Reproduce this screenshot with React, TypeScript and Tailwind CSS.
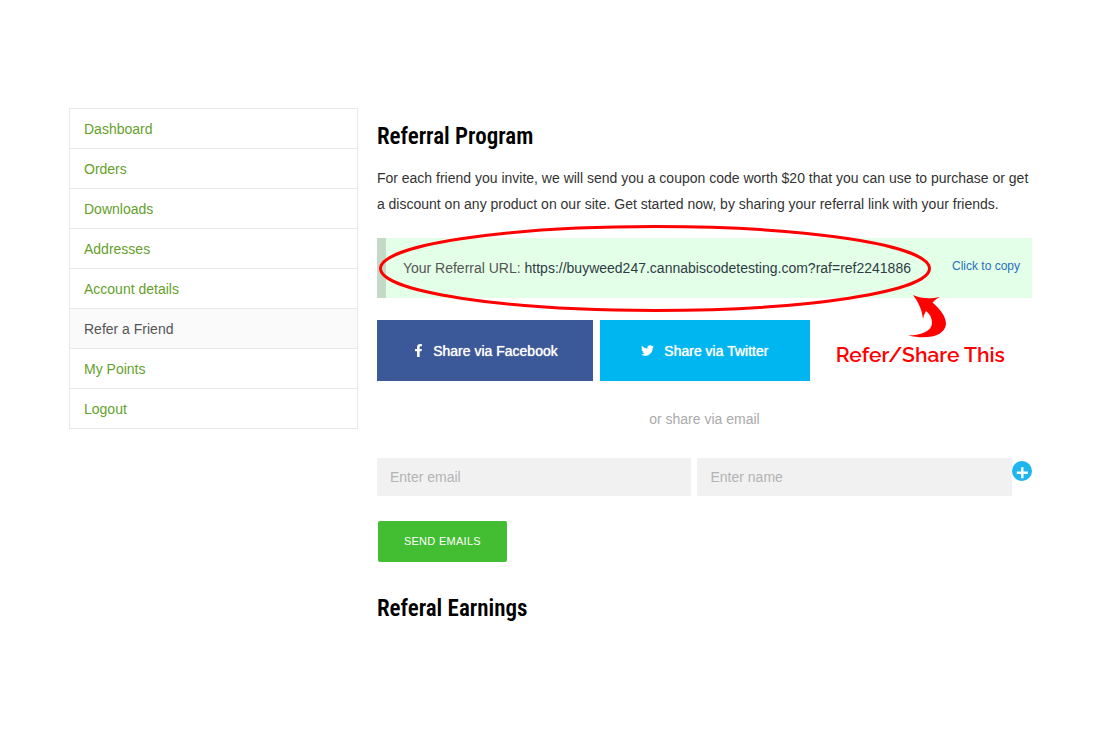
import React, { useState } from "react";
import { FaFacebookF, FaTwitter } from "react-icons/fa";

const referralUrl = "https://buyweed247.cannabiscodetesting.com?raf=ref2241886";

const menuItems = [
  "Dashboard",
  "Orders",
  "Downloads",
  "Addresses",
  "Account details",
  "Refer a Friend",
  "My Points",
  "Logout",
];

export default function App() {
  return (
    <div className="min-h-screen bg-white pt-27 pr-[82px] pb-10 pl-[69px] font-['Liberation_Sans',Arial,sans-serif] text-sm text-[#333]">
      <div className="flex items-start gap-[19px]">
        <AccountMenu active="Refer a Friend" />
        <main className="min-w-0 flex-1 pt-[13px]">
          <SectionTitle>Referral Program</SectionTitle>
          <p className="mt-3 leading-[26px]">
            For each friend you invite, we will send you a coupon code worth $20 that you can use to purchase or get a
            discount on any product on our site. Get started now, by sharing your referral link with your friends.
          </p>
          <ReferralLink />
          <ShareButtons />
          <p className="mt-[26px] text-center leading-6 text-[#aaa]">or share via email</p>
          <InviteForm />
          <div className="mt-[31px]">
            <SectionTitle>Referal Earnings</SectionTitle>
          </div>
        </main>
      </div>
    </div>
  );
}

function AccountMenu({ active }: { active: string }) {
  return (
    <nav className="w-[30%] shrink-0 border border-b-0 border-[#e9e9e9]">
      <ul>
        {menuItems.map((item) => (
          <li key={item} className="border-b border-[#e9e9e9]">
            <a
              href="#"
              className={
                item === active
                  ? "block bg-[#fafafa] px-3.5 pt-px text-sm leading-[38px] text-[#555]"
                  : "block px-3.5 pt-px text-sm leading-[38px] text-[#659f2b]"
              }
            >
              {item}
            </a>
          </li>
        ))}
      </ul>
    </nav>
  );
}

function SectionTitle({ children }: { children: React.ReactNode }) {
  return (
    <h2 className="font-['Roboto_Condensed','Arial_Narrow',sans-serif] text-[23px] leading-8 font-semibold text-black">
      {children}
    </h2>
  );
}

function ReferralLink() {
  const copy = () => navigator.clipboard?.writeText(referralUrl);

  return (
    <div className="relative mt-[21px] flex h-15 items-center justify-between border-l-9 border-[#c4d9c6] bg-[#e4ffe7] pr-3 pl-[17px]">
      <p className="text-[#555]">
        Your Referral URL: <span className="text-[#2f3b45]">{referralUrl}</span>
      </p>
      <button type="button" onClick={copy} className="pb-1 text-xs text-[#2a6ebb]">
        Click to copy
      </button>
      <Callout />
    </div>
  );
}

// Red ring around the link, with the arrow and caption hanging below it
function Callout() {
  return (
    <div className="pointer-events-none absolute -top-4 -left-2 w-[627px]">
      <svg width="627" height="121" viewBox="0 0 627 121" className="block">
        <ellipse cx="277" cy="46.5" rx="274.5" ry="42" fill="none" stroke="#f00" strokeWidth="3" />
        <path
          d="M535 73 C544 77 552 77 562 75 Q557 77 554.5 80.5 C563 88 568 95 568 102 C567 114 550 118 530 113.5 C544 113 554 109 554 101 C554 96 552 92 548 89 Q546 92 545 97 C544 88 541 81 535 73 Z"
          fill="#f00"
        />
      </svg>
      <p className="text-right font-['Raleway','Inter',sans-serif] text-[21px] leading-6 font-semibold text-[#f00]">
        Refer/Share This
      </p>
    </div>
  );
}

function ShareButtons() {
  return (
    <div className="mt-[22px] flex gap-[7px] text-white [text-shadow:0_0_1px_#fff]">
      <a href="#" className="flex h-[61px] w-[33%] items-center justify-center gap-2 bg-[#3b5998]">
        <FaFacebookF size={13} />
        Share via Facebook
      </a>
      <a href="#" className="flex h-[61px] w-[32%] items-center justify-center gap-2.5 bg-[#00b6f1]">
        <FaTwitter size={13} />
        Share via Twitter
      </a>
    </div>
  );
}

function InviteForm() {
  const [email, setEmail] = useState("");
  const [name, setName] = useState("");

  return (
    <form onSubmit={(e) => e.preventDefault()} className="mt-[27px]">
      <div className="flex items-start">
        <div className="flex min-w-0 flex-1 gap-1.5">
          <input
            type="email"
            aria-label="Enter email"
            placeholder="Enter email"
            value={email}
            onChange={(e) => setEmail(e.target.value)}
            className="h-[38px] min-w-0 flex-1 bg-[#f1f1f1] px-[13px] placeholder:text-[#b4b4b4]"
          />
          <input
            type="text"
            aria-label="Enter name"
            placeholder="Enter name"
            value={name}
            onChange={(e) => setName(e.target.value)}
            className="h-[38px] min-w-0 flex-1 bg-[#f1f1f1] px-[13px] placeholder:text-[#b4b4b4]"
          />
        </div>
        <button type="button" aria-label="Add another friend" className="pt-[3px]">
          <svg width="20" height="20" viewBox="0 0 20 20">
            <circle cx="10" cy="10" r="10" fill="#1fb5ee" />
            <path d="M10.3 6.2v11M4.8 11.7h11" stroke="#fff" strokeWidth="2.4" />
          </svg>
        </button>
      </div>
      <button
        type="submit"
        className="mt-[25px] ml-px h-[41px] rounded-xs bg-[#43bd32] px-[26px] text-[11px] tracking-wide text-white uppercase"
      >
        Send Emails
      </button>
    </form>
  );
}
